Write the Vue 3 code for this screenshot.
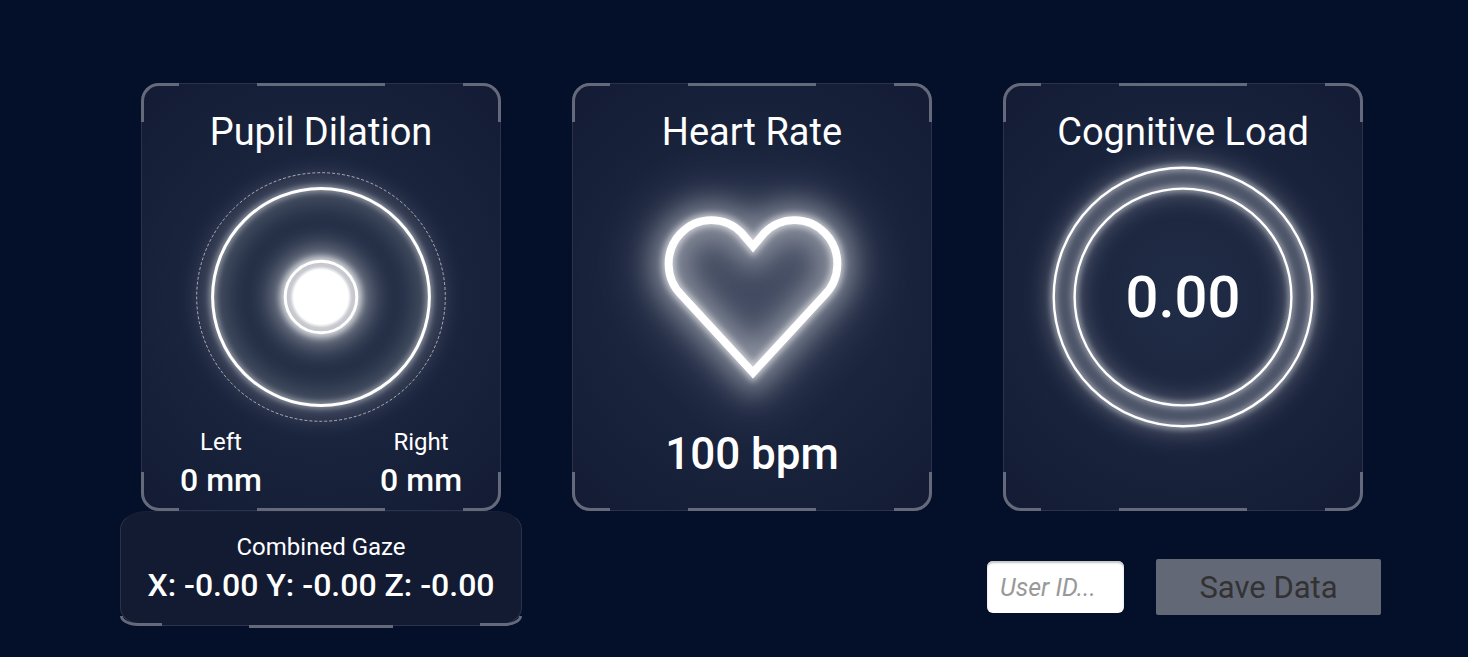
<script setup>
import { ref } from 'vue'

const userId = ref('')
const pupils = [
  { side: 'Left', value: '0 mm' },
  { side: 'Right', value: '0 mm' }
]
const heartRate = '100 bpm'
const cognitiveLoad = '0.00'
const gaze = 'X: -0.00 Y: -0.00 Z: -0.00'
const corners = ['tl', 'tr', 'bl', 'br']
</script>

<template>
  <main class="dashboard">
    <div class="cards">
      <section class="card">
        <i v-for="c in corners" :key="c" class="corner" :class="c"></i>
        <i class="bar top"></i><i class="bar bottom"></i>
        <h2>Pupil Dilation</h2>
        <div class="gauge">
          <svg viewBox="0 0 360 264" aria-hidden="true">
            <defs>
              <filter id="soft" x="-50%" y="-50%" width="200%" height="200%"><feGaussianBlur stdDeviation="3" /></filter>
              <filter id="wide" x="-60%" y="-60%" width="220%" height="220%"><feGaussianBlur stdDeviation="13" /></filter>
              <filter id="halo" x="-60%" y="-60%" width="220%" height="220%"><feGaussianBlur stdDeviation="26" /></filter>
              <radialGradient id="iris">
                <stop offset="0.76" stop-color="#fff" />
                <stop offset="0.86" stop-color="#cbccd2" />
                <stop offset="1" stop-color="#c2c3cb" />
              </radialGradient>
            </defs>
            <circle cx="180" cy="132" r="109" fill="#4a5560" opacity="0.18" />
            <circle class="line" cx="180" cy="132" r="109" stroke-width="16" opacity="0.3" filter="url(#wide)" />
            <circle class="line" cx="180" cy="132" r="109" stroke-width="5" opacity="0.6" filter="url(#soft)" />
            <circle cx="180" cy="132" r="48" fill="#fff" opacity="0.5" filter="url(#wide)" />
            <circle cx="180" cy="132" r="41" fill="#fff" opacity="0.65" filter="url(#soft)" />
            <circle class="line" cx="180" cy="132" r="125" stroke-width="1" stroke-dasharray="3 2" opacity="0.6" />
            <circle class="line" cx="180" cy="132" r="109" stroke-width="3" />
            <circle cx="180" cy="132" r="36" fill="url(#iris)" />
            <circle class="line" cx="180" cy="132" r="36" stroke-width="3" />
          </svg>
        </div>
        <dl class="pupils">
          <div v-for="p in pupils" :key="p.side">
            <dt>{{ p.side }}</dt>
            <dd>{{ p.value }}</dd>
          </div>
        </dl>
      </section>

      <section class="card">
        <i v-for="c in corners" :key="c" class="corner" :class="c"></i>
        <i class="bar top"></i><i class="bar bottom"></i>
        <h2>Heart Rate</h2>
        <div class="gauge">
          <svg viewBox="0 0 360 264" aria-hidden="true">
            <defs>
              <path id="heart" d="M181 81 L170 68 A43 44 0 1 0 110 131 L181 208 L252 131 A43 44 0 1 0 192 68 Z" />
            </defs>
            <use href="#heart" fill="#fff" opacity="0.08" />
            <use href="#heart" class="line" stroke-width="50" opacity="0.2" filter="url(#halo)" />
            <use href="#heart" class="line" stroke-width="34" opacity="0.34" filter="url(#wide)" />
            <use href="#heart" class="line" stroke-width="13" opacity="0.6" filter="url(#soft)" />
            <use href="#heart" class="line" stroke-width="8" />
          </svg>
        </div>
        <p class="rate">{{ heartRate }}</p>
      </section>

      <section class="card">
        <i v-for="c in corners" :key="c" class="corner" :class="c"></i>
        <i class="bar top"></i><i class="bar bottom"></i>
        <h2>Cognitive Load</h2>
        <div class="gauge">
          <svg viewBox="0 0 360 264" aria-hidden="true">
            <circle class="line" cx="180" cy="132" r="120" stroke-width="28" opacity="0.3" filter="url(#wide)" />
            <circle class="line" cx="180" cy="132" r="130" stroke-width="5" opacity="0.6" filter="url(#soft)" />
            <circle class="line" cx="180" cy="132" r="109" stroke-width="5" opacity="0.6" filter="url(#soft)" />
            <circle class="line" cx="180" cy="132" r="130" stroke-width="2.4" />
            <circle class="line" cx="180" cy="132" r="109" stroke-width="2.4" />
          </svg>
          <p class="load">{{ cognitiveLoad }}</p>
        </div>
      </section>
    </div>

    <div class="footer">
      <section class="gaze">
        <i class="corner bl"></i><i class="corner br"></i>
        <i class="bar under"></i>
        <h3>Combined Gaze</h3>
        <p>{{ gaze }}</p>
      </section>
      <form class="controls" @submit.prevent>
        <input v-model="userId" type="text" aria-label="User ID" placeholder="User ID..." />
        <button type="submit" disabled>Save Data</button>
      </form>
    </div>
  </main>
</template>

<style>
html {
  background: #040f29;
}
</style>

<style scoped>
.dashboard {
  padding: 83px 0 24px;
  color: #fff;
  font-family: Roboto, "Liberation Sans", sans-serif;
}
h2, h3, p, dl, dd {
  margin: 0;
  font-weight: 400;
  text-align: center;
  white-space: nowrap;
}
.cards {
  display: grid;
  grid-template-columns: repeat(3, 1fr);
  gap: 71px;
  padding: 0 105px 0 141px;
}
.card {
  position: relative;
  box-sizing: border-box;
  padding: 26px 0 10px;
  border: 1px solid #2a3349;
  border-radius: 18px;
  background: radial-gradient(ellipse 75% 65% at center, #212c46, #131c34);
}
.corner {
  position: absolute;
  box-sizing: border-box;
  width: 38px;
  height: 39px;
  border: 0 solid #646a7b;
}
.tl { top: -1px; left: -1px; border-width: 3px 0 0 3px; border-top-left-radius: 18px; }
.tr { top: -1px; right: -1px; border-width: 3px 3px 0 0; border-top-right-radius: 18px; }
.bl { bottom: -1px; left: -1px; border-width: 0 0 3px 3px; border-bottom-left-radius: 18px; }
.br { bottom: -1px; right: -1px; border-width: 0 3px 3px 0; border-bottom-right-radius: 18px; }
.bar {
  position: absolute;
  left: 32%;
  width: 36%;
  height: 3px;
  background: #646a7b;
}
.top { top: -1px; }
.bottom { bottom: -1px; }
.under { bottom: -3px; }
h2 {
  font-size: 38px;
  line-height: 44px;
}
.gauge {
  display: grid;
  place-items: center;
  margin-top: 11px;
}
.gauge > * {
  grid-area: 1 / 1;
}
.gauge svg {
  display: block;
  width: 100%;
  height: 264px;
  overflow: visible;
}
.line {
  fill: none;
  stroke: #fff;
}
.load {
  position: relative;
  font-size: 58px;
  font-weight: 500;
  line-height: 64px;
}
.rate {
  position: relative;
  font-size: 44px;
  font-weight: 500;
  line-height: 50px;
}
.pupils {
  position: relative;
  display: flex;
  justify-content: space-between;
  padding: 0 38px;
}
dt, h3 {
  font-size: 24px;
  line-height: 27px;
  text-align: center;
}
dd, .gaze p {
  margin-top: 4px;
  font-size: 32px;
  font-weight: 500;
  line-height: 40px;
}
.footer {
  display: flex;
  justify-content: space-between;
  align-items: flex-start;
  padding: 0 87px 0 120px;
}
.gaze {
  position: relative;
  box-sizing: border-box;
  min-width: 402px;
  padding: 22px 12px 20px;
  border: 1px solid #2a3349;
  border-top-color: #172038;
  border-radius: 27px / 18px;
  background: #131b33;
}
.gaze .corner {
  width: 42px;
  height: 10px;
}
.gaze .bl { border-bottom-left-radius: 18px 10px; }
.gaze .br { border-bottom-right-radius: 18px 10px; }
.controls {
  display: flex;
  align-items: center;
  gap: 32px;
  margin-top: 48px;
}
input {
  box-sizing: border-box;
  width: 137px;
  height: 52px;
  padding: 0 13px;
  border: 0;
  border-radius: 6px;
  background: #fff;
  box-shadow: inset 0 2px 2px #c4c4c4;
  color: #323232;
  font: 400 25px Roboto, "Liberation Sans", sans-serif;
}
input::placeholder {
  color: #999;
  font-style: italic;
  opacity: 1;
}
button {
  width: 225px;
  height: 56px;
  padding: 0;
  border: 0;
  border-radius: 2px;
  background: #636877;
  color: #323232;
  font: 400 31px Roboto, "Liberation Sans", sans-serif;
}
</style>
